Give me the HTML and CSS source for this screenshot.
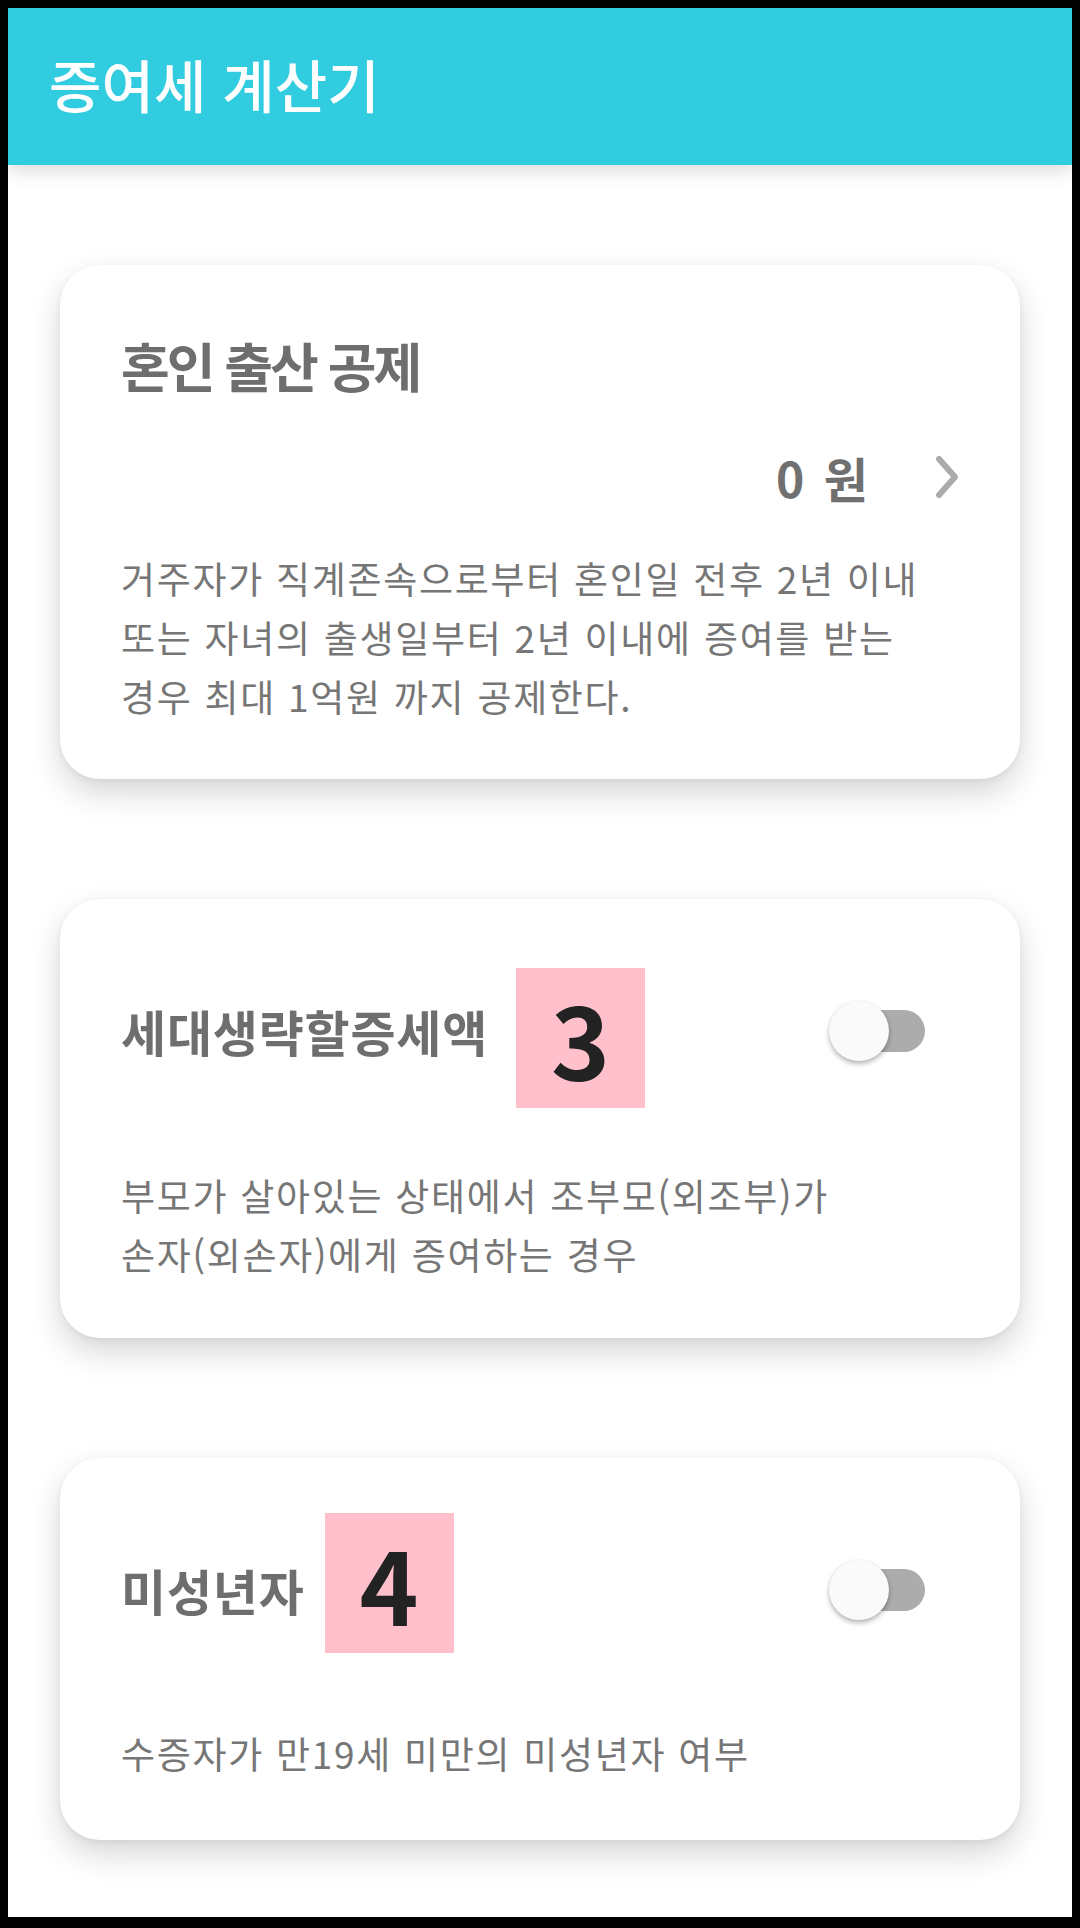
FILE: index.html
```html
<!DOCTYPE html>
<html lang="ko">
<head>
<meta charset="utf-8">
<title>증여세 계산기</title>
<link rel="stylesheet" href="styles.css">
</head>
<body>
<div class="screen">
  <header class="app-bar">
    <h1 class="app-title">증여세 계산기</h1>
  </header>
  <main class="content">
    <section class="card card-amount">
      <h2 class="card-title big">혼인 출산 공제</h2>
      <div class="amount-row">
        <span class="amount">0 원</span>
        <svg class="chevron" width="26" height="46" viewBox="0 0 26 46" aria-hidden="true">
          <polyline points="5,5 21,23 5,41" fill="none" stroke="#ababab" stroke-width="6" stroke-linecap="round" stroke-linejoin="round"/>
        </svg>
      </div>
      <p class="desc">거주자가 직계존속으로부터 혼인일 전후 2년 이내<br>또는 자녀의 출생일부터 2년 이내에 증여를 받는<br>경우 최대 1억원 까지 공제한다.</p>
    </section>

    <section class="card card-toggle">
      <div class="toggle-row">
        <h2 class="card-title">세대생략할증세액</h2>
        <span class="badge badge-low">3</span>
        <div class="switch"><span class="track"></span><span class="thumb"></span></div>
      </div>
      <p class="desc">부모가 살아있는 상태에서 조부모(외조부)가<br>손자(외손자)에게 증여하는 경우</p>
    </section>

    <section class="card card-toggle">
      <div class="toggle-row">
        <h2 class="card-title">미성년자</h2>
        <span class="badge badge-high">4</span>
        <div class="switch"><span class="track"></span><span class="thumb"></span></div>
      </div>
      <p class="desc">수증자가 만19세 미만의 미성년자 여부</p>
    </section>
  </main>
</div>
</body>
</html>
```

FILE: styles.css
```css
* { box-sizing: border-box; }

html, body {
  margin: 0;
  padding: 0;
  background: #000;
}

body {
  font-family: "Noto Sans CJK KR", "Noto Sans", sans-serif;
  width: 1080px;
  height: 1928px;
  padding: 8px 8px 11px 8px;
}

.screen {
  width: 1064px;
  height: 1909px;
  background: #ffffff;
  overflow: hidden;
  display: flex;
  flex-direction: column;
}

.app-bar {
  height: 157px;
  flex: none;
  background: #32cce1;
  display: flex;
  align-items: center;
  padding: 0 0 8px 41px;
  box-shadow: 0 6px 18px rgba(0, 0, 0, 0.14);
  position: relative;
  z-index: 1;
}

.app-title {
  margin: 0;
  color: #ffffff;
  font-size: 57px;
  font-weight: 500;
  letter-spacing: 0;
  line-height: 60px;
}

.content {
  padding: 100px 52px 0 52px;
  display: flex;
  flex-direction: column;
  gap: 120px;
}

.card {
  background: #ffffff;
  border-radius: 40px;
  box-shadow: 0 14px 32px rgba(0, 0, 0, 0.16), 0 2px 6px rgba(0, 0, 0, 0.06);
  padding: 0 60px 0 61px;
}

.card-title {
  margin: 0;
  color: #6e6e6e;
  font-size: 49px;
  font-weight: 700;
  letter-spacing: 0.8px;
  line-height: 60px;
  white-space: nowrap;
}

.card-title.big {
  font-size: 53px;
  letter-spacing: -3px;
  word-spacing: 0;
}

.card-amount {
  padding-top: 70px;
  padding-bottom: 53px;
}

.amount-row {
  margin-top: 52px;
  height: 60px;
  display: flex;
  align-items: center;
  justify-content: flex-end;
}

.amount {
  color: #707070;
  font-size: 48px;
  font-weight: 700;
  word-spacing: 6px;
  line-height: 60px;
}

.chevron {
  margin-left: 66px;
  display: block;
}

.desc {
  margin: 0;
  color: #767676;
  font-size: 37px;
  font-weight: 400;
  letter-spacing: 1.7px;
  line-height: 59px;
  white-space: nowrap;
}

.card-amount .desc {
  margin-top: 42px;
}

.card-toggle {
  padding-top: 55px;
  padding-bottom: 54px;
}

.card-toggle:last-child {
  padding-bottom: 57px;
}

.card-toggle .desc {
  margin-top: 58px;
}

.toggle-row {
  display: flex;
  align-items: center;
}

.badge {
  width: 129px;
  height: 140px;
  margin-left: 28px;
  background: #ffc0cb;
  color: #222222;
  font-size: 100px;
  font-weight: 700;
  line-height: 140px;
  text-align: center;
}

.badge-low { margin-top: 14px; }
.badge-high { margin-bottom: 13px; margin-left: 20px; }

.switch {
  position: relative;
  width: 96px;
  height: 60px;
  margin-left: auto;
  margin-right: 35px;
  flex: none;
}

.track {
  position: absolute;
  left: 4px;
  right: 0;
  top: 9px;
  height: 42px;
  border-radius: 21px;
  background: #acacac;
}

.thumb {
  position: absolute;
  left: 0;
  top: 0;
  width: 60px;
  height: 60px;
  border-radius: 50%;
  background: #fafafa;
  box-shadow: 0 3px 5px rgba(0, 0, 0, 0.28), 0 0 2px rgba(0, 0, 0, 0.08);
}
```
